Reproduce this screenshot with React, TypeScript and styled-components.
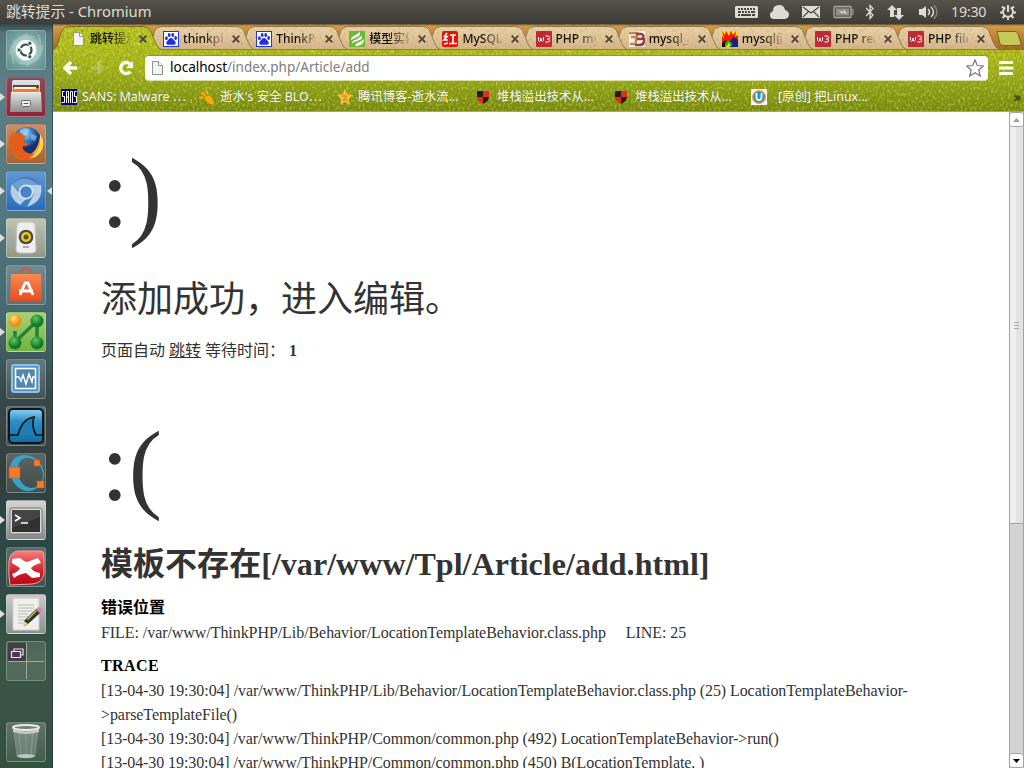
import React from "react";
import styled, { createGlobalStyle, css } from "styled-components";

const grain = (color: string, slope: number, bias: number, seed: number) =>
  `url("data:image/svg+xml,${encodeURIComponent(
    `<svg xmlns='http://www.w3.org/2000/svg' width='256' height='96'><filter id='n' x='0' y='0' width='100%' height='100%'><feTurbulence type='fractalNoise' baseFrequency='0.42 0.3' numOctaves='2' seed='${seed}' stitchTiles='stitch'/><feColorMatrix values='0 0 0 0 ${color} ${slope} 0 0 0 ${bias}'/></filter><rect width='256' height='96' filter='url(#n)'/></svg>`
  )}")`;

const darkGrain = grain("0.25 0 0 0 0 0.33 0 0 0 0 0.02", 2, -0.88, 3);
const lightGrain = grain("0.82 0 0 0 0 0.87 0 0 0 0 0.2", 1.5, -0.72, 9);
const woodGrain = grain("0.5 0 0 0 0 0.3 0 0 0 0 0.08", 0.9, -0.4, 5);

const uiFont = `"Noto Sans", "Open Sans", "Noto Sans CJK SC", sans-serif`;
const pageFont = `"Liberation Serif", "Noto Sans CJK SC", serif`;

const Global = createGlobalStyle`
  * { box-sizing: border-box; }
  html, body { margin: 0; height: 768px; overflow: hidden; }
  #root { height: 768px; }
  h1, h3, p { margin: 0; }
  svg { display: block; flex: none; }
`;

const Desktop = styled.div`
  width: 1024px;
  height: 768px;
  display: grid;
  grid-template: 24px 744px / 53px 971px;
  overflow: hidden;
  font-family: ${uiFont};
`;

const Panel = styled.header`
  grid-column: 1 / 3;
  display: flex;
  align-items: center;
  justify-content: space-between;
  padding: 0 7px 0 6px;
  color: #dfdbd2;
  background: linear-gradient(#55534a, #3d3c37);
`;
const PanelTitle = styled.div`
  font-size: 14.8px;
  line-height: 22px;
  margin-bottom: 2px;
  white-space: nowrap;
`;
const Indicators = styled.div`
  display: flex;
  align-items: center;
  gap: 12px;
  fill: #dfdbd2;
`;
const Clock = styled.span`
  width: 36px;
  font-size: 14.3px;
  letter-spacing: -0.25px;
  line-height: 24px;
  white-space: nowrap;
`;

const Launcher = styled.nav`
  display: flex;
  flex-direction: column;
  gap: 7px;
  padding: 6px 7px 6px 6px;
  border-right: 1px solid rgba(20, 35, 35, 0.45);
  background: linear-gradient(#33474a 0, #557579 9px, #5a7f85 60px, #54787f 180px, #486a72 280px, #405c60 330px,
    #38484a 370px, #323f3c 450px, #2d4744 500px, #2e4d44 590px, #3b5745 640px, #385247 690px, #33503f 744px);
`;
const Tile = styled.div<{ $bg?: string; $last?: boolean }>`
  position: relative;
  width: 40px;
  height: 40px;
  flex: none;
  margin-top: ${(p) => (p.$last ? "auto" : "0")};
  border-radius: 3px;
  border: 1px solid rgba(255, 255, 255, 0.24);
  background: ${(p) => p.$bg ?? "linear-gradient(rgba(255,255,255,.2), rgba(255,255,255,.07))"};
  box-shadow: 0 0 1px rgba(0, 0, 0, 0.35);
  > svg { margin: -1px; }
`;
const Pip = styled.i<{ $right?: boolean }>`
  position: absolute;
  top: 15px;
  border: 4px solid transparent;
  ${(p) => p.$right
    ? css`right: -7px; border-left: 0; border-right: 5px solid #d9e0e0;`
    : css`left: -7px; border-right: 0; border-left: 5px solid #d9e0e0;`}
`;

const Browser = styled.main`
  display: grid;
  grid-template-rows: 26px 33px 29px 656px;
  background: ${darkGrain}, ${lightGrain}, linear-gradient(#b2be18 24px, #9dad16 50px, #8c9d12 64px, #748609 87px);
`;
const TabStrip = styled.div`
  display: flex;
  align-items: flex-end;
  overflow: hidden;
  background: ${woodGrain}, linear-gradient(#50452f 0, #d29c45 2px, #bd8434 12px, #9c641f 26px);
`;
const Tab = styled.div<{ $order: number }>`
  position: relative;
  z-index: ${(p) => p.$order};
  flex: none;
  width: 109px;
  height: 24px;
  margin-right: -15.9px;
  display: flex;
  align-items: center;
  padding: 2px 0 0 17px;
`;
const tabPath = "M0 24 C5 22 6 12 9 4.5 Q11 .5 16 .5 H90 Q95 .5 97.5 4.5 C101 12 103 22 109 24 Z";
const TabFace = styled.div<{ $active?: boolean }>`
  position: absolute;
  inset: 0;
  clip-path: path("${tabPath}");
  background: ${(p) => (p.$active
    ? `${darkGrain}, ${lightGrain}, linear-gradient(#bac421, #b0bd18)`
    : `${woodGrain}, linear-gradient(#e9d3a9, #dfc49b 55%, #d4b48c)`)};
`;
const TabOutline = styled.svg`
  position: absolute;
  inset: 0;
  fill: none;
`;
const Favicon = styled.svg`
  position: relative;
  width: 16px;
  height: 16px;
`;
const TabTitle = styled.span`
  position: relative;
  width: 40px;
  margin: 0 7px 0 4px;
  overflow: hidden;
  white-space: nowrap;
  font-size: 12px;
  font-weight: 500;
  line-height: 20px;
  color: #141008;
  mask-image: linear-gradient(90deg, #000 50%, rgba(0, 0, 0, 0.15));
`;
const CloseIcon = styled.svg`
  position: relative;
  margin-left: 2px;
  stroke: #4c4436;
  stroke-width: 1.8;
`;
const NewTab = styled.svg`
  margin: 0 0 3px 11px;
`;

const Toolbar = styled.div`
  display: flex;
  align-items: center;
  padding: 2px 10px 0 9px;
`;
const NavIcon = styled.svg<{ $dim?: boolean }>`
  margin-right: 12px;
  opacity: ${(p) => (p.$dim ? 0.22 : 1)};
  fill: none;
  stroke: #fbfcf0;
  stroke-width: 3.4;
`;
const Omnibox = styled.div`
  width: 843px;
  height: 26px;
  margin: 0 11px 0 -1px;
  padding: 0 4px 0 4px;
  display: flex;
  align-items: center;
  border-radius: 4px;
  background: #fff;
  border-top: 1px solid #8b9a35;
  border-bottom: 1px solid #dce0a8;
`;
const Url = styled.span`
  flex: 1;
  margin-left: 5px;
  font-size: 13.5px;
  line-height: 20px;
  margin-bottom: 2px;
  color: #7d7d7d;
  b { font-weight: 400; color: #000; }
`;
const Bookmarks = styled.div`
  display: flex;
  align-items: center;
  padding: 0 3px 1px 8px;
  border-bottom: 1px solid #a2ae55;
  color: #fff;
  font-size: 12.4px;
  text-shadow: 0 0 1px rgba(50, 65, 0, 0.5);
`;
const Bookmark = styled.div<{ $gap?: number }>`
  width: 138px;
  flex: none;
  display: flex;
  align-items: center;
  gap: ${(p) => p.$gap ?? 5}px;
  white-space: nowrap;
  line-height: 20px;
`;
const More = styled.span`
  margin-left: auto;
  font-size: 14px;
  line-height: 20px;
  color: #2b3208;
`;

const Viewport = styled.div`
  display: grid;
  grid-template-columns: 956px 15px;
  overflow: hidden;
  background: #fff;
`;
const Page = styled.div`
  height: 656px;
  overflow: hidden;
  font-family: ${pageFont};
  font-size: 16px;
  color: #333;
`;
const Message = styled.section`
  padding: 24px 48px;
`;
const Face = styled.p`
  font-size: 100px;
  line-height: 120px;
  margin: -2px 0 14px;
`;
const Success = styled.p`
  font-size: 36px;
  line-height: 65px;
`;
const Jump = styled.p`
  padding-top: 9px;
  height: 28px;
  line-height: 18px;
  a { color: #333; text-decoration: underline; }
`;
const ErrorTitle = styled.h1`
  margin-top: -1px;
  font-size: 32px;
  line-height: 48px;
  letter-spacing: 0.04px;
`;
const Info = styled.div`
  padding-top: 10px;
  h3 { color: #000; font-size: 16px; line-height: 19px; margin-bottom: 4px; }
  & + & { padding-top: 11px; }
  & + & h3 { letter-spacing: 0.4px; }
`;
const TraceText = styled.p<{ $tight: number }>`
  line-height: 24px;
  letter-spacing: -${(p) => p.$tight}px;
`;
const Line = styled.span`
  margin-left: 20px;
`;

const Scrollbar = styled.div`
  display: flex;
  flex-direction: column;
  background: #d3d3d3;
  border: solid #a3a3a3;
  border-width: 0 1px;
`;
const ScrollButton = styled.div`
  height: 15px;
  display: grid;
  place-items: center;
  background: #fff;
  border: solid #a3a3a3;
  border-width: 1px 0;
  border-radius: 3px;
`;
const Thumb = styled.div`
  height: 397px;
  display: grid;
  place-items: center;
  border-bottom: 1px solid #a3a3a3;
  background: linear-gradient(90deg, #f0f0f0 50%, #e3e3e3 50%);
`;
const Track = styled.div`
  flex: 1;
`;

const Paw = () => (
  <Favicon viewBox="0 0 16 16">
    <rect width="16" height="16" fill="#2637dc" />
    <rect x="1" y="1" width="14" height="14" fill="#fff" />
    <g fill="#2430df">
      <ellipse cx="3.4" cy="7.2" rx="1.4" ry="1.9" /><ellipse cx="6.2" cy="4" rx="1.4" ry="1.9" />
      <ellipse cx="9.7" cy="4" rx="1.4" ry="1.9" /><ellipse cx="12.6" cy="7" rx="1.4" ry="1.9" />
      <path d="M8 7c2 0 2.500 2 4 3.200 1.500 1.400.600 3.600-1.200 3.600H5.200C3.400 13.800 2.600 11.700 4 10.300 5.400 9 6 7 8 7z" />
    </g>
  </Favicon>
);
const W3 = () => (
  <Favicon viewBox="0 0 16 16">
    <rect width="16" height="16" rx="1" fill="#bd2b35" />
    <path d="M2.500 6v3.500l1 1 1.500-1.500V7v2l1.500 1.500 1-1V6M9.500 5h3l1 1v1l-1 1H11M12.500 8l1 1v1l-1 1h-3" fill="none" stroke="#fff" />
  </Favicon>
);
const DocIcon = () => (
  <Favicon viewBox="0 0 16 16">
    <path d="M3.500 1.500h6l4 4v9h-10z" fill="#f3f3f3" stroke="#929292" /><path d="M9.500 1.500v4h4" fill="#fff" stroke="#929292" />
  </Favicon>
);
const Leaf = () => (
  <Favicon viewBox="0 0 16 16">
    <rect width="16" height="16" rx="1" fill="#6db936" />
    <path d="M2 9C2 5 6 5 11 1c1 5-4 5-9 8zM3 12.500c0-4 5-3 10-8 1 6-5 4-10 8zM6 15c1-4 5-3 9-7 0 6-5 7-9 7z" fill="#fff" />
  </Favicon>
);
const Hong = () => (
  <Favicon viewBox="0 0 16 16">
    <rect width="16" height="16" rx="2" fill="#e41408" />
    <path d="M5 2 2.500 5.500H5L2 9h4M2 13l4-1M8 4h6M11 4v8M7 12.500h8" fill="none" stroke="#fff" strokeWidth="1.700" />
  </Favicon>
);
const Jb = () => (
  <Favicon viewBox="0 0 16 16">
    <rect width="16" height="16" fill="#f7efe9" />
    <path d="M0 2h8v4H2M1 13h4q2 0 2-3V6" fill="none" stroke="#b58a55" strokeWidth="2.500" />
    <path d="M7 3h5q3 0 2 4 2 1 1 4-1 3-4 3H6M8 8h6" fill="none" stroke="#9b3c38" strokeWidth="2.500" />
  </Favicon>
);
const Flame = () => (
  <Favicon viewBox="0 0 16 16">
    <rect width="16" height="16" fill="#f3e400" />
    <path d="M0 0 3 4 4 0 7 5 9 0 11 4 14 0 13 6 16 4V12H0V5l2 3z" fill="#eb1a0c" />
    <path d="M8 10 12 6l4 3v7H8z" fill="#18257b" /><path d="M0 12 4 9l2 4-3 3H0z" fill="#111" />
    <path d="M4 15v-2q2-4 5 0v2" fill="none" stroke="#18c720" strokeWidth="2" />
  </Favicon>
);

const tabs: { title: string; icon: React.ReactNode }[] = [
  { title: "跳转提示", icon: <DocIcon /> },
  { title: "thinkphp", icon: <Paw /> },
  { title: "ThinkPHP", icon: <Paw /> },
  { title: "模型实例", icon: <Leaf /> },
  { title: "MySQLi", icon: <Hong /> },
  { title: "PHP mys", icon: <W3 /> },
  { title: "mysql_fe", icon: <Jb /> },
  { title: "mysql函数", icon: <Flame /> },
  { title: "PHP read", icon: <W3 /> },
  { title: "PHP files", icon: <W3 /> },
];

const Shield = () => (
  <Favicon viewBox="0 0 16 16">
    <path d="M2 2h6v6H2z" fill="#241c1b" /><path d="M8 2h6v6H8z" fill="#e32b25" />
    <path d="M2 8h6v7Q2 12 2 8z" fill="#e32b25" /><path d="M8 8h6q0 4-6 7z" fill="#241c1b" />
  </Favicon>
);

const bookmarks: { title: string; gap?: number; icon: React.ReactNode }[] = [
  {
    title: "SANS: Malware ⋯",
    icon: (
      <Favicon viewBox="0 0 16 16">
        <rect width="16" height="16" fill="#08086e" />
        <path d="M3.500 2.500h-2v5h2v6h-3M5.500 14V2.500h2V14M5.500 8h2M9.500 14V2.500h2V14M15.500 2.500h-2v5h2v6h-3" fill="none" stroke="#fff" />
      </Favicon>
    ),
  },
  {
    title: "逝水's 安全 BLO⋯",
    icon: (
      <Favicon viewBox="0 0 16 16" fill="#fda80b">
        <path d="M6 8q4-4 7 1l2 5q-1 3-4 1L7 12Q5 10 6 8z" />
        <ellipse cx="2.500" cy="8.500" rx="2.500" ry="1.200" /><ellipse cx="4.200" cy="5" rx="2.800" ry="1.300" transform="rotate(38 4.200 5)" />
        <ellipse cx="7.800" cy="3" rx="2.700" ry="1.300" transform="rotate(65 7.800 3)" />
      </Favicon>
    ),
  },
  {
    title: "腾讯博客-逝水流...",
    icon: (
      <Favicon viewBox="0 0 16 16">
        <path d="m8 0 2.400 5.300 5.600.7-4.200 4 1.100 6L8 13.100 3.100 16l1.100-6L0 6l5.600-.7z" fill="#fcbe38" />
        <path d="M5 7h5L6 11h5" fill="none" stroke="#c07a13" />
      </Favicon>
    ),
  },
  { title: "堆栈溢出技术从...", gap: 6, icon: <Shield /> },
  { title: "堆栈溢出技术从...", gap: 6, icon: <Shield /> },
  {
    title: "[原创] 把Linux...",
    gap: 11,
    icon: (
      <Favicon viewBox="0 0 16 16">
        <rect width="16" height="16" fill="#fff" />
        <circle cx="8" cy="8" r="6.300" fill="#2490d0" stroke="#eea033" strokeWidth="1.600" />
        <path d="M5.500 4v4.500q0 2.500 2.500 2.500t2.500-2.500V4" fill="none" stroke="#fff" strokeWidth="1.800" />
      </Favicon>
    ),
  },
];

const Gradients = styled.svg`
  position: absolute;
`;
const Defs = () => (
  <Gradients width="0" height="0">
    <defs>
      <linearGradient id="metal" x2="0" y2="1"><stop stopColor="#e5e5e3" /><stop offset="1" stopColor="#8f908e" /></linearGradient>
      <linearGradient id="sea" x2="0" y2="1"><stop stopColor="#90d1f1" /><stop offset=".35" stopColor="#2d91ca" /><stop offset="1" stopColor="#116da7" /></linearGradient>
      <linearGradient id="rubber" x2="0" y2="1"><stop stopColor="#f57f7e" /><stop offset=".6" stopColor="#d51d29" /><stop offset="1" stopColor="#b20c18" /></linearGradient>
      <linearGradient id="bag" x2="0" y2="1"><stop stopColor="#fb8b50" /><stop offset="1" stopColor="#e64c21" /></linearGradient>
      <radialGradient id="globe" cx=".45" cy=".25"><stop stopColor="#a0d8f3" /><stop offset=".5" stopColor="#3a7fc6" /><stop offset="1" stopColor="#152f72" /></radialGradient>
      <radialGradient id="leafball" cx=".4" cy=".3"><stop stopColor="#63c75f" /><stop offset="1" stopColor="#14792c" /></radialGradient>
      <radialGradient id="amber" cx=".4" cy=".3"><stop stopColor="#ffe17c" /><stop offset="1" stopColor="#f08d13" /></radialGradient>
    </defs>
  </Gradients>
);

const Art = ({ children }: { children: React.ReactNode }) => (
  <svg width="40" height="40" viewBox="0 0 40 40">{children}</svg>
);

const apps: { name: string; bg?: string; open?: boolean; focused?: boolean; last?: boolean; art: React.ReactNode }[] = [
  {
    name: "dash",
    bg: "radial-gradient(circle, #d7e9e4 0, #a8cac6 40%, #75a09f 62%, #5f8d8e)",
    art: (
      <>
        <path d="M3 25Q8 4 28 7M37 15Q34 36 13 33M8 34Q0 12 22 4M32 5Q41 25 20 36" fill="none" stroke="#c2dddb" strokeWidth="2" opacity=".35" />
        <circle cx="20" cy="20" r="10.300" fill="#fff" />
        <circle cx="20" cy="20" r="5.500" fill="none" stroke="#315554" strokeWidth="2.200" strokeDasharray="9.500 2" strokeDashoffset="4" />
        <g fill="#315554" stroke="#fff" strokeWidth=".7"><circle cx="13" cy="20" r="2" /><circle cx="23.800" cy="13.300" r="2" /><circle cx="23.800" cy="26.700" r="2" /></g>
      </>
    ),
  },
  {
    name: "files",
    bg: "linear-gradient(#8e4a56, #8e2639)",
    open: true,
    art: (
      <>
        <rect x="6" y="3" width="28" height="32" rx="2" fill="url(#metal)" />
        <path d="M7 8h26v8H7z" fill="#514b47" /><path d="M7 11h26v6H7z" fill="#f27a2c" /><path d="M8 10h22v2H8z" fill="#fff0d2" />
        <path d="M5 15h30l1 20H4z" fill="url(#metal)" /><path d="M5 15.500h30" stroke="#eee" />
        <rect x="15.500" y="23.500" width="9" height="6" rx="1" fill="#eee" stroke="#626262" /><path d="M17.500 26.500h5" stroke="#555" />
      </>
    ),
  },
  {
    name: "firefox",
    bg: "linear-gradient(#c98f66, #a66232)",
    open: true,
    art: (
      <>
        <circle cx="21" cy="17" r="14" fill="url(#globe)" />
        <path d="M14 6q6-4 10 0l-4 4-6-1zM25 10l6 2-2 5-4-2z" fill="#b8dcf0" opacity=".5" />
        <path d="M34 12c6 13-3 24-14 24-7 0-10-3-12-5 14 5 24-2 26-19z" fill="#f4a72c" />
        <path d="M7 7C3 12 2 18 4 24c3 9 11 13 19 12 7-1 11-6 12-11-4 5-10 6-15 3-3-2-4-4-3-6 3 1 5-1 7-3-5 1-7-2-6-5l3-2c-3 0-5-1-6-3-4-1-6 0-7 2z" fill="#e55d18" />
        <path d="M34 10c5 7 4 15-1 20-3 3-6 4-10 4 6-3 10-8 11-14z" fill="#ffd652" />
      </>
    ),
  },
  {
    name: "chromium",
    bg: "linear-gradient(#6197d2, #276cb8)",
    open: true,
    focused: true,
    art: (
      <>
        <circle cx="20" cy="21" r="15" fill="#3f7cc0" />
        <path d="M7 13Q19 1 34 15L20 14q-6 1-7 7z" fill="#6d9fd5" />
        <path d="M6 13Q1 26 14 34l6-6-7-6z" fill="#b7cee6" /><path d="M22 14h13q3 16-14 22l7-13z" fill="#b8d1ea" />
        <circle cx="20" cy="21" r="6.700" fill="#4b83c8" stroke="#d9e8f5" strokeWidth="1.700" />
      </>
    ),
  },
  {
    name: "music",
    bg: "linear-gradient(#bfc4b4, #949983)",
    open: true,
    art: (
      <>
        <path d="M8 12Q1 20 8 28M33 12Q39 20 33 28M5 9Q-2 20 5 31" fill="none" stroke="#97a9ab" strokeWidth="2" opacity=".5" />
        <path d="M11 7q0-3 4-3h10q4 0 4 3l1 25q0 3-4 3H14q-4 0-4-3z" fill="#eee" stroke="#c4c4bd" />
        <circle cx="20" cy="19" r="7.300" fill="#494842" /><circle cx="20" cy="19" r="5" fill="#e7ca1f" /><circle cx="20" cy="19" r="2.500" fill="#56521e" />
        <path d="M17 29h6" stroke="#aaa" strokeWidth="2" />
      </>
    ),
  },
  {
    name: "software",
    art: (
      <>
        <path d="M15 12V6q5-5 10 0v6" fill="none" stroke="#d45a38" strokeWidth="2" />
        <path d="M5 9h30l1 27H4z" fill="url(#bag)" />
        <path d="m14 30 5-12h3l5 12M13 26h14" fill="none" stroke="#fff" strokeWidth="2.800" />
      </>
    ),
  },
  {
    name: "network",
    bg: "linear-gradient(#a5d078, #74b33e)",
    open: true,
    art: (
      <>
        <path d="M9 30 31 9v22M9 19v11" fill="none" stroke="#248435" strokeWidth="3.500" />
        <circle cx="9" cy="9" r="6.500" fill="url(#amber)" />
        <g fill="url(#leafball)"><circle cx="31" cy="9" r="6.500" /><circle cx="9" cy="31" r="6.500" /><circle cx="31" cy="31" r="6.500" /></g>
      </>
    ),
  },
  {
    name: "monitor",
    art: (
      <>
        <rect x="6" y="6" width="27" height="27" rx="2" fill="#4b91c6" stroke="#8fc1e5" strokeWidth="2" />
        <rect x="9.500" y="9.500" width="20" height="20" fill="#5087ad" stroke="#fff" strokeWidth="1.600" />
        <path d="M10 18h3l2 4 2-6 3 9 3-10 3 8 1-5h3" fill="none" stroke="#fff" strokeWidth="1.500" />
      </>
    ),
  },
  {
    name: "wireshark",
    art: (
      <>
        <rect x="3" y="3" width="34" height="34" rx="4" fill="url(#sea)" stroke="#0c161b" strokeWidth="2" />
        <path d="M3 29h9q4-16 16-18-3 9 2 18h7" fill="#217eb5" stroke="#111" strokeWidth="1.700" />
      </>
    ),
  },
  {
    name: "ring",
    art: (
      <>
        <path fillRule="evenodd" d="M17 2c11-1 20 8 21 18 1 9-6 17-14 18C13 39 5 29 4 19 3 10 8 3 17 2zM23 5c-8-1-12 5-11 13 0 9 5 16 13 17 7 0 12-6 12-14C36 13 30 6 23 5z" fill="#38a2cb" />
        <g fill="#f77a28" stroke="#c65712" strokeWidth=".6"><rect x="3" y="14" width="11" height="11" /><rect x="28" y="7" width="6" height="6" /><rect x="31" y="28" width="7" height="7" /></g>
      </>
    ),
  },
  {
    name: "terminal",
    bg: "linear-gradient(#d3d4d2, #888a89)",
    open: true,
    art: (
      <>
        <rect x="4" y="8" width="32" height="26" rx="2" fill="#d8d8d6" stroke="#777" />
        <rect x="6" y="10" width="28" height="22" fill="#303232" /><path d="M6 10h28v7L6 28z" fill="#555" opacity=".5" />
        <path d="m9 15 5 3-5 3M15 23h7" fill="none" stroke="#fff" strokeWidth="1.600" />
      </>
    ),
  },
  {
    name: "xmind",
    art: (
      <>
        <path d="M12 4h23q3 0 3 3v19q-1 10-12 11L4 38q-2-11-1-24Q4 5 12 4z" fill="url(#rubber)" stroke="#f5a0a4" />
        <path d="M6 12l8-1q5 4 7 4l11-4 3 5q-6 1-10 5 2 4 9 5v4l-8 1-6-5q-7 1-12 5l-2-4q6-2 8-6l-8-5z" fill="#fff" />
      </>
    ),
  },
  {
    name: "editor",
    bg: "linear-gradient(#c8c9c8, #8e9090)",
    open: true,
    art: (
      <>
        <path d="M7 4h26v32H7z" fill="#efefec" stroke="#ccc" />
        <path d="M12 11h16M12 14h16M12 17h14M12 20h10M12 23h12M12 26h9M12 29h7" stroke="#b8b8b8" />
        <path d="m18 27 12-12 4 4-12 11-4 2z" fill="#303536" /><path d="m18 27 4 3-5 2z" fill="#f0dc70" /><path d="m21 25 9-9 1 1-9 9z" fill="#d3cb48" />
        <path d="m30 15 2-2q3 0 4 4l-2 2z" fill="#d584b0" />
      </>
    ),
  },
  {
    name: "workspaces",
    bg: "rgba(255,255,255,.12)",
    art: (
      <>
        <path d="M2 2h18v18H2z" fill="#493c49" /><path d="M2 20.500h36M20.500 2v36" stroke="#9aada2" />
        <path d="M8 10V8h9v6h-2M5.500 10.500h9v6h-9z" fill="none" stroke="#e7e5e7" strokeWidth="1.200" />
      </>
    ),
  },
  {
    name: "trash",
    last: true,
    art: (
      <>
        <path d="m8 8 3 26q9 4 18 0l3-26z" fill="#c6d4cd" opacity=".28" stroke="#eef3ef" />
        <path d="m13 10 2 23M20 10v23M27 10l-2 23" stroke="#dce8e1" opacity=".2" />
        <ellipse cx="20" cy="5.500" rx="13" ry="2.500" fill="#708078" stroke="#e8e9e7" strokeWidth="2" />
        <path d="M7 7q13 5 26 0v3q-13 4-26 0z" fill="#c7cbc8" /><ellipse cx="20" cy="34" rx="9" ry="2" fill="#d6ddd8" opacity=".75" />
      </>
    ),
  },
];

const PanelIcons = () => (
  <>
    <svg width="23" height="14" viewBox="0 0 23 14"><path fillRule="evenodd" d="M1 1h21l1 1v10l-1 1H1l-1-1V2zM3 3v2h2V3zm3 0v2h2V3zm3 0v2h2V3zm3 0v2h2V3zm3 0v2h2V3zm3 0v2h2V3zM3 6v2h3V6zm4 0v2h2V6zm3 0v2h2V6zm3 0v2h2V6zm3 0v2h4V6zM3 9v2h2V9zm3 0v2h10V9zm11 0v2h3V9z" /></svg>
    <svg width="19" height="14" viewBox="0 0 19 14"><path d="M4 14Q0 14 0 10 0 7 3 6q0-6 6-6 5 0 6 5 4 1 4 4.500T15 14z" /></svg>
    <svg width="20" height="14" viewBox="0 0 20 14"><path d="M1 1h18v12H1z" /><path d="m2 2 8 6 8-6M2 12l6-6M18 12l-6-6" fill="none" stroke="#48463f" strokeWidth="1.100" /></svg>
    <svg width="21" height="14" viewBox="0 0 21 14"><rect x="1" y="1.500" width="17" height="11" rx="1" fill="#5d5b55" stroke="#aaa69e" strokeWidth="1.300" /><path d="M3 3.500h13v7H3z" fill="#918e87" /><path d="M18.500 4.500H20v5h-1.500" fill="none" stroke="#aaa69e" /><path d="m5.500 5.500 5 1.500V4.500l4 4.500-5-1.500V9z" /></svg>
    <svg width="8" height="16" viewBox="0 0 8 16"><path d="m0 4 7 7-3 3.500V1.500L7 4.500 0 12" fill="none" stroke="#dfdbd2" strokeWidth="1.300" /></svg>
    <svg width="19" height="17" viewBox="0 0 19 17"><path d="m6 1 5 5H8v7H4V6H1zM13 16l-5-5h3V4h4v7h3z" /></svg>
    <svg width="22" height="16" viewBox="0 0 22 16"><path d="M2 5h3l4-3v12l-4-3H2z" /><path d="M11 5q3 3 0 6M14 3q5 5 0 10" fill="none" stroke="#dfdbd2" strokeWidth="1.500" /><path d="M17 1q6 7 0 14" fill="none" stroke="#858179" strokeWidth="1.500" /></svg>
    <Clock>19:30</Clock>
    <svg width="18" height="18" viewBox="0 0 18 18" fill="none" stroke="#dfdbd2" strokeWidth="2"><path d="M6.500 4.500A5 5 0 1 0 11.500 4.500M9 2v7M3 3.500l2.200 2M15 3.500l-2.200 2M1 9.500h3M17 9.500h-3M3.500 15l2-2M14.500 15l-2-2M9 17v-3" /></svg>
  </>
);

export default function App() {
  return (
    <Desktop>
      <Global />
      <Panel>
        <PanelTitle>跳转提示 - Chromium</PanelTitle>
        <Indicators><PanelIcons /></Indicators>
      </Panel>

      <Launcher>
        <Defs />
        {apps.map((app) => (
          <Tile key={app.name} $bg={app.bg} $last={app.last}>
            <Art>{app.art}</Art>
            {app.open && <Pip />}
            {app.focused && <Pip $right />}
          </Tile>
        ))}
      </Launcher>

      <Browser>
        <TabStrip>
          {tabs.map((tab, i) => (
            <Tab key={i} $order={20 - i}>
              <TabFace $active={i === 0} />
              <TabOutline width="109" height="24" viewBox="0 0 109 24">
                <path d="M0 24 C5 22 6 12 9 4.500 Q11 .5 16 .5 H90 Q95 .5 97.500 4.500 C101 12 103 22 109 24" stroke={i === 0 ? "#806b22" : "#95764e"} />
                {i > 0 && <path d="M0 23.500h109" stroke="#98764d" />}
              </TabOutline>
              {tab.icon}
              <TabTitle>{tab.title}</TabTitle>
              <CloseIcon width="8" height="8" viewBox="0 0 8 8"><path d="m.7.7 6.600 6.600m0-6.600L.7 7.300" /></CloseIcon>
            </Tab>
          ))}
          <NewTab width="27" height="17" viewBox="0 0 27 17">
            <path d="M2 1.500h18q2 0 3 2l3 10q0 2-2 2H8q-2 0-3-2z" fill="#c5c957" stroke="#865e20" />
          </NewTab>
        </TabStrip>

        <Toolbar>
          <NavIcon width="16" height="16" viewBox="0 0 16 16"><path d="M9 2 3 8l6 6M3 8h12" /></NavIcon>
          <NavIcon width="16" height="16" viewBox="0 0 16 16" $dim><path d="m7 2 6 6-6 6M13 8H1" /></NavIcon>
          <NavIcon width="16" height="16" viewBox="0 0 16 16"><path d="M12.500 11.500A5.500 5.500 0 1 1 12 4" /><path d="M15 1v7H8z" fill="#fbfcf0" stroke="none" /></NavIcon>
          <Omnibox>
            <DocIcon />
            <Url><b>localhost</b>/index.php/Article/add</Url>
            <svg width="18" height="18" viewBox="0 0 18 18"><path d="m9 1 2.300 5.500 6 .5-4.500 4 1.400 6L9 13.700 3.800 17l1.400-6L.7 7l6-.5z" fill="#fff" stroke="#777" strokeWidth="1.200" /></svg>
          </Omnibox>
          <svg width="14" height="16" viewBox="0 0 14 16"><path d="M1.500 2.500h11M1.500 8h11M1.500 13.500h11" stroke="#fbfcf0" strokeWidth="3.200" strokeLinecap="round" /></svg>
        </Toolbar>

        <Bookmarks>
          {bookmarks.map((b, i) => (
            <Bookmark key={i} $gap={b.gap}>{b.icon}<span>{b.title}</span></Bookmark>
          ))}
          <More>»</More>
        </Bookmarks>

        <Viewport>
          <Page>
            <Message>
              <Face>:)</Face>
              <Success>添加成功，进入编辑。</Success>
              <Jump>页面自动 <a>跳转</a> 等待时间： <b>1</b></Jump>
            </Message>
            <Message>
              <Face>:(</Face>
              <ErrorTitle>模板不存在[/var/www/Tpl/Article/add.html]</ErrorTitle>
              <Info>
                <h3>错误位置</h3>
                <TraceText $tight={0.065}>FILE: /var/www/ThinkPHP/Lib/Behavior/LocationTemplateBehavior.class.php<Line>LINE: 25</Line></TraceText>
              </Info>
              <Info>
                <h3>TRACE</h3>
                <TraceText $tight={0.078}>[13-04-30 19:30:04] /var/www/ThinkPHP/Lib/Behavior/LocationTemplateBehavior.class.php (25) LocationTemplateBehavior-<wbr />&gt;parseTemplateFile()</TraceText>
                <TraceText $tight={0.09}>[13-04-30 19:30:04] /var/www/ThinkPHP/Common/common.php (492) LocationTemplateBehavior-&gt;run()</TraceText>
                <TraceText $tight={0.09}>[13-04-30 19:30:04] /var/www/ThinkPHP/Common/common.php (450) B(LocationTemplate, )</TraceText>
              </Info>
            </Message>
          </Page>
          <Scrollbar>
            <ScrollButton><svg width="7" height="4" viewBox="0 0 7 4"><path d="m0 4 3.500-4L7 4z" fill="#a0a0a0" /></svg></ScrollButton>
            <Thumb><svg width="5" height="7" viewBox="0 0 5 7"><path d="M0 .5h5M0 3.500h5M0 6.500h5" stroke="#aaa" /></svg></Thumb>
            <Track />
            <ScrollButton><svg width="7" height="4" viewBox="0 0 7 4"><path d="m0 0 3.500 4L7 0z" fill="#000" /></svg></ScrollButton>
          </Scrollbar>
        </Viewport>
      </Browser>
    </Desktop>
  );
}
